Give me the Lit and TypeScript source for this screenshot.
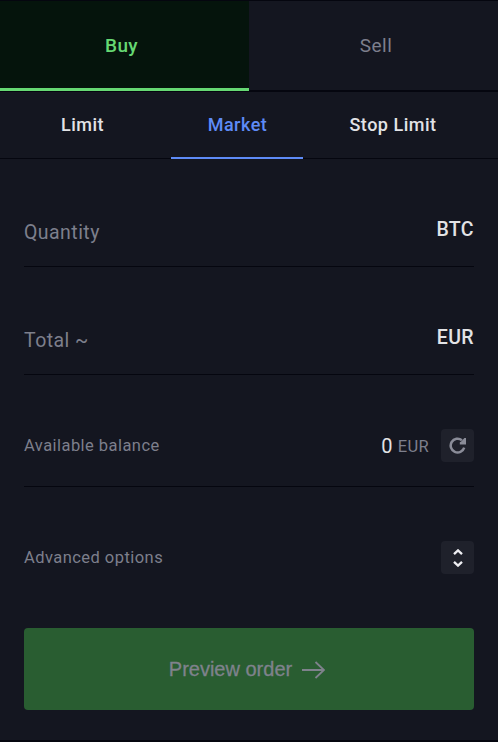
import { LitElement, html, css } from "lit";
import { customElement, property } from "lit/decorators.js";

@customElement("form-row")
class FormRow extends LitElement {
  @property() label = "";
  @property({ reflect: true }) size = "small";
  static styles = css`
    :host {
      display: flex;
      justify-content: space-between;
      align-items: center;
      box-sizing: border-box;
      margin: 0 24px;
      border-bottom: 1px solid #05060f;
      color: #7d7f8c;
      font-size: 16.5px;
      letter-spacing: 0.45px;
      line-height: 24px;
    }
    :host([size="large"]) {
      font-size: 19.5px;
      letter-spacing: 0.45px;
    }
    .label {
      padding-top: 1px;
    }
    :host([size="large"]) .label {
      padding-top: 7px;
    }
    .value {
      display: flex;
      align-items: center;
    }
  `;
  render() {
    return html`<span class="label">${this.label}</span><span class="value"><slot></slot></span>`;
  }
}

@customElement("app-root")
class AppRoot extends LitElement {
  static styles = css`
    :host {
      display: flex;
      flex-direction: column;
      box-sizing: border-box;
      width: 498px;
      height: 742px;
      border-top: 1px solid #05060f;
      border-bottom: 2px solid #05060f;
      background: #141620;
      color: #e2e3e6;
      font-family: Roboto, sans-serif;
      overflow: hidden;
    }
    .sides {
      display: grid;
      grid-template-columns: 1fr 1fr;
      height: 91px;
      flex: none;
      font-size: 19px;
      letter-spacing: 0.5px;
    }
    .side {
      display: flex;
      align-items: center;
      justify-content: center;
      box-sizing: border-box;
      color: #7d7f8c;
      border-bottom: 2px solid #05060f;
    }
    .side.buy {
      background: #05140c;
      color: #66d873;
      font-weight: 500;
      letter-spacing: 0.3px;
      border-bottom: 3px solid #66d873;
      box-shadow: 0 1px #05060f;
      margin-bottom: 1px;
      padding-top: 2px;
      padding-right: 6px;
    }
    .side.sell {
      padding-left: 5px;
    }
    .types {
      display: flex;
      height: 67px;
      flex: none;
      box-sizing: border-box;
      border-bottom: 1px solid #05060f;
      padding-left: 24px;
      font-size: 18px;
      font-weight: 500;
      letter-spacing: 0.5px;
    }
    .type {
      display: flex;
      align-items: center;
      justify-content: center;
      box-sizing: border-box;
      height: 67px;
      border-bottom: 2px solid transparent;
    }
    .limit {
      width: 117px;
      margin-right: 30px;
    }
    .market {
      width: 132px;
      padding-left: 1px;
      color: #5e8bf7;
      border-color: #5e8bf7;
    }
    .stop {
      width: 180px;
    }
    .quantity,
    .total {
      height: 108px;
      padding-top: 33px;
    }
    .balance,
    .advanced {
      height: 112px;
      padding-top: 29px;
    }
    .advanced {
      border: 0;
    }
    .unit {
      color: #e2e3e6;
      font-weight: 500;
      letter-spacing: 0.4px;
      padding-top: 2px;
    }
    .amount {
      color: #e2e3e6;
      font-size: 20px;
      margin-right: 5px;
      padding-top: 1px;
    }
    .currency {
      letter-spacing: 0.3px;
      padding-top: 3px;
    }
    .tool {
      display: grid;
      place-items: center;
      width: 33px;
      height: 33px;
      padding: 0;
      border: 0;
      border-radius: 4px;
      background: #1f212b;
      color: #8a8c98;
    }
    .balance .tool {
      margin-left: 12px;
    }
    .expand {
      color: #eeeef2;
    }
    svg {
      display: block;
      fill: none;
      stroke: currentColor;
    }
    .submit {
      display: flex;
      align-items: center;
      justify-content: center;
      height: 82px;
      flex: none;
      margin: 29px 24px 0;
      border: 0;
      border-radius: 4px;
      padding: 0 4px 0 0;
      background: #295d31;
      color: #7f828c;
      font: 400 20px "Liberation Sans", Arial, sans-serif;
    }
    .submit svg {
      margin: 2px 0 0 10px;
    }
    .submit span {
      -webkit-text-stroke: 0.3px currentColor;
    }
  `;

  render() {
    return html`
      <div class="sides">
        <div class="side buy">Buy</div>
        <div class="side sell">Sell</div>
      </div>
      <div class="types">
        <div class="type limit">Limit</div>
        <div class="type market">Market</div>
        <div class="type stop">Stop Limit</div>
      </div>
      <form-row class="quantity" size="large" label="Quantity"><span class="unit">BTC</span></form-row>
      <form-row class="total" size="large" label="Total ~"><span class="unit">EUR</span></form-row>
      <form-row class="balance" label="Available balance">
        <span class="amount">0</span><span class="currency">EUR</span>
        <button class="tool" aria-label="Refresh balance">
          <svg width="17" height="17" viewBox="0 0 17 17">
            <path d="M15.2 10.6A6.9 6.9 0 1 1 12.9 3.2" stroke-width="2.5" />
            <path d="M17 1v6.4H10.8V5.2L12.2 4.4 15.4 1Z" fill="currentColor" stroke="none" />
          </svg>
        </button>
      </form-row>
      <form-row class="advanced" label="Advanced options">
        <button class="tool expand" aria-label="Expand">
          <svg width="10" height="18" viewBox="0 0 10 18">
            <path d="M1 5.2 5 1.4 9 5.2M1 12.8 5 16.6 9 12.8" stroke-width="2.3" />
          </svg>
        </button>
      </form-row>
      <button class="submit">
        <span>Preview order</span>
        <svg width="23" height="18" viewBox="0 0 23 18">
          <path d="M0 9H22M13.5 1 22 9 13.5 17" stroke-width="1.8" />
        </svg>
      </button>
    `;
  }
}
